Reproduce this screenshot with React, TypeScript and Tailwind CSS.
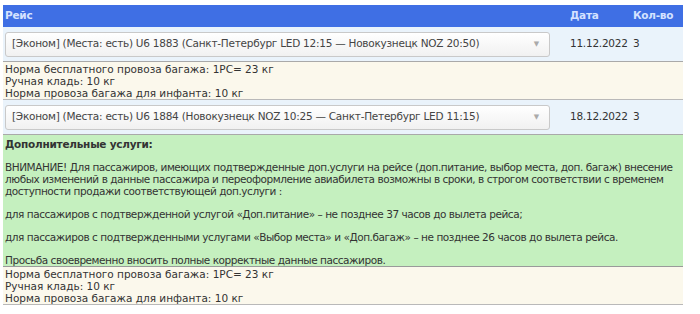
import React from 'react'

interface Flight {
  label: string
  date: string
  count: number
  extra?: boolean
}

const flights: Flight[] = [
  {
    label: '[Эконом] (Места: есть) U6 1883 (Санкт-Петербург LED 12:15 — Новокузнецк NOZ 20:50)',
    date: '11.12.2022',
    count: 3,
  },
  {
    label: '[Эконом] (Места: есть) U6 1884 (Новокузнецк NOZ 10:25 — Санкт-Петербург LED 11:15)',
    date: '18.12.2022',
    count: 3,
    extra: true,
  },
]

function Baggage() {
  return (
    <div className="bg-[#fbf8ec] px-[2px] pt-[1px] leading-[12px] border-b border-[#b9b9b9] tracking-[0px]">
      <div>Норма бесплатного провоза багажа: 1PC= 23 кг</div>
      <div>Ручная кладь: 10 кг</div>
      <div>Норма провоза багажа для инфанта: 10 кг</div>
    </div>
  )
}

function ExtraServices() {
  return (
    <div className="bg-[#c5f0bf] px-[2px] pt-[3px] leading-[12px] border-b border-[#9a9a9a] tracking-[-0.45px]">
      <div className="font-bold mb-[11px] tracking-[-0.25px]">Дополнительные услуги:</div>
      <p>
        ВНИМАНИЕ! Для пассажиров, имеющих подтвержденные доп.услуги на рейсе (доп.питание, выбор места, доп. багаж) внесение
        любых изменений в данные пассажира и переоформление авиабилета возможны в сроки, в строгом соответствии с временем
        доступности продажи соответствующей доп.услуги :
      </p>
      <p className="mt-[11px]">для пассажиров с подтвержденной услугой «Доп.питание» – не позднее 37 часов до вылета рейса;</p>
      <p className="mt-[11px]">для пассажиров с подтвержденными услугами «Выбор места» и «Доп.багаж» – не позднее 26 часов до вылета рейса.</p>
      <p className="mt-[11px]">Просьба своевременно вносить полные корректные данные пассажиров.</p>
    </div>
  )
}

export default function App() {
  return (
    <div className="w-[700px] h-[314px] bg-white pt-[5px] pl-[3px] text-[10.5px] tracking-[-0.25px] text-[#333] font-['Verdana','DejaVu_Sans',sans-serif] overflow-hidden">
      <div className="w-[680px]">
        {/* HEADER */}
        <div className="flex items-center h-[22px] bg-[#3f6fe4] text-[#d5e2ff] font-bold whitespace-nowrap">
          <div className="flex-1 pl-[2px]">Рейс</div>
          <div className="w-[63px]">Дата</div>
          <div className="w-[50px]">Кол-во</div>
        </div>

        {flights.map((f) => (
          <div key={f.date}>
            <div className="flex items-center h-[35px] bg-[#eaf3fb] border-b border-[#a9a9a9] whitespace-nowrap">
              <div className="flex-1 pl-[2px]">
                <div className="flex items-center justify-between w-[545px] h-[25px] pl-[6px] pr-[10px] rounded-[3px] border border-[#c9c9c9] bg-gradient-to-b from-white to-[#f1f1f1] text-[#444]">
                  <span>{f.label}</span>
                  <span className="text-[7px] text-[#aaa]">▼</span>
                </div>
              </div>
              <div className="w-[63px]">{f.date}</div>
              <div className="w-[50px]">{f.count}</div>
            </div>
            {f.extra && <ExtraServices />}
            <Baggage />
          </div>
        ))}
      </div>
    </div>
  )
}
